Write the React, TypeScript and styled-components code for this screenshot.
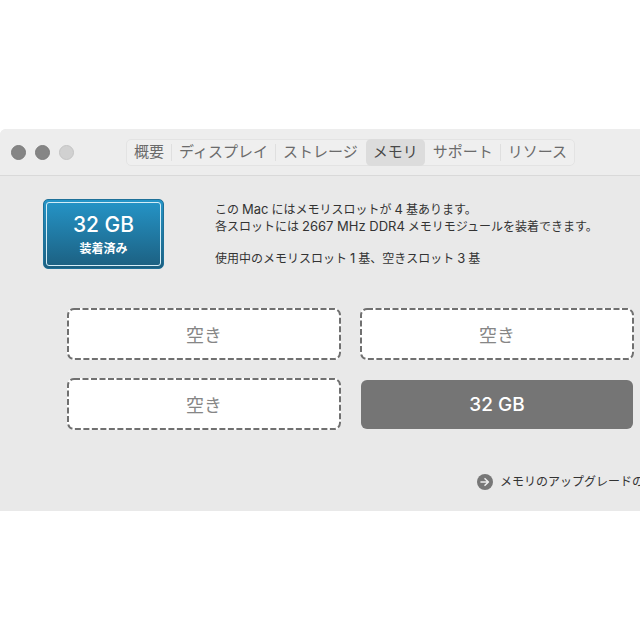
import React from "react";
import styled, { createGlobalStyle, css } from "styled-components";

const GlobalStyle = createGlobalStyle`
  * { box-sizing: border-box; }
  body {
    margin: 0;
    background: #fff;
    color: #333;
    font-family: Inter, "Noto Sans CJK JP", sans-serif;
    overflow-x: hidden;
  }
`;

const Page = styled.main`
  padding: 129px 0;
`;

const Window = styled.section`
  background: #e9e9e9;
  border-top-left-radius: 6px;
  overflow: hidden;
`;

const TitleBar = styled.header`
  display: flex;
  align-items: center;
  height: 47px;
  padding-left: 11px;
  background: #ededed;
  border-bottom: 1px solid #d9d9d9;
`;

const Lights = styled.div`
  display: flex;
  flex: none;
  gap: 9px;
  width: 115px;
`;

const Light = styled.button<{ $dim?: boolean }>`
  width: 15px;
  height: 15px;
  padding: 0;
  border: 1px solid ${(p) => (p.$dim ? "#c4c4c4" : "#7d7d7d")};
  border-radius: 50%;
  background: ${(p) => (p.$dim ? "#d1d1d1" : "#858585")};
`;

const Tabs = styled.nav`
  display: flex;
  flex: none;
  height: 27px;
  border: 1px solid #e3e3e3;
  border-radius: 5px;
  background: #efefef;
`;

const Tab = styled.button<{ $active?: boolean; $divided?: boolean }>`
  display: flex;
  align-items: center;
  padding: 0 7px;
  border: 0;
  background: none;
  color: #6b6b6b;
  font: 400 15px/20px Inter, "Noto Sans CJK JP", sans-serif;
  white-space: nowrap;

  &::after {
    content: "";
    width: 1px;
    height: 17px;
    margin-right: -8px;
    margin-left: 7px;
    background: ${(p) => (p.$divided ? "#dfdfdf" : "transparent")};
  }

  & + & {
    margin-left: 1px;
  }

  ${(p) =>
    p.$active &&
    css`
      margin-top: -1px;
      margin-bottom: -1px;
      border-radius: 5px;
      background: #dcdcdc;
      color: #484848;
    `}
`;

const Summary = styled.div`
  display: flex;
  align-items: flex-start;
  gap: 51px;
  padding: 23px 0 0 43px;
`;

const Badge = styled.div`
  flex: none;
  width: 121px;
  padding: 2px;
  border: 1px solid #1e7098;
  border-radius: 5px;
  background: linear-gradient(#2595c8, #1c5f80);
`;

const BadgeFace = styled.div`
  display: flex;
  flex-direction: column;
  align-items: center;
  height: 64px;
  padding-top: 7px;
  border: 1px solid #d4edf7;
  border-radius: 3px;
  color: #fff;
`;

const BadgeSize = styled.strong`
  font-size: 21px;
  font-weight: 500;
  line-height: 30px;
`;

const BadgeState = styled.span`
  font-size: 12px;
  font-weight: 700;
  line-height: 18px;
`;

const Description = styled.div`
  padding-top: 2px;
  font-size: 12px;
  line-height: 16px;
  white-space: nowrap;
`;

const Line = styled.p<{ $spaced?: boolean }>`
  margin: ${(p) => (p.$spaced ? "15px" : 0)} 0 0;
`;

const Latin = styled.span`
  margin: 0 3px;
  font-size: 13px;
`;

const Slots = styled.div`
  display: grid;
  grid-template-columns: 1fr 1fr;
  gap: 18px 19px;
  padding: 39px 6px 0 67px;
`;

const EmptySlot = styled.div`
  position: relative;
  display: flex;
  align-items: center;
  justify-content: center;
  height: 52px;
  border-radius: 7px;
  background: #fff;
  color: #868686;
  font-size: 18px;
`;

const Dashes = styled.svg`
  position: absolute;
  inset: 0;
  width: 100%;
  height: 100%;

  rect {
    width: calc(100% - 2px);
    height: calc(100% - 2px);
    fill: none;
    stroke: #707070;
    stroke-width: 2px;
    stroke-dasharray: 6 2.5;
  }
`;

const FilledSlot = styled.div`
  display: flex;
  align-items: center;
  justify-content: center;
  margin: 2px 1px 1px;
  height: 49px;
  border-radius: 6px;
  background: #757575;
  color: #fff;
  font-size: 19px;
  font-weight: 500;
`;

const Footer = styled.footer`
  display: flex;
  padding: 42px 0 19px 477px;
`;

const UpgradeLink = styled.a`
  display: flex;
  align-items: center;
  gap: 7px;
  color: #333;
  font-size: 12px;
  line-height: 20px;
  text-decoration: none;
  white-space: nowrap;
`;

const ArrowIcon = styled.svg`
  flex: none;
  width: 16px;
  height: 16px;
`;

const tabs = [
  { label: "概要", divided: true },
  { label: "ディスプレイ", divided: true },
  { label: "ストレージ" },
  { label: "メモリ", active: true },
  { label: "サポート", divided: true },
  { label: "リソース" },
];

function Empty() {
  return (
    <EmptySlot>
      <Dashes aria-hidden="true">
        <rect x="1" y="1" rx="6" />
      </Dashes>
      空き
    </EmptySlot>
  );
}

export default function App() {
  return (
    <Page>
      <GlobalStyle />
      <Window>
        <TitleBar>
          <Lights>
            <Light aria-label="閉じる" />
            <Light aria-label="しまう" />
            <Light aria-label="拡大" $dim disabled />
          </Lights>
          <Tabs>
            {tabs.map((t) => (
              <Tab
                key={t.label}
                $active={t.active}
                $divided={t.divided}
                aria-current={t.active ? "page" : undefined}
              >
                {t.label}
              </Tab>
            ))}
          </Tabs>
        </TitleBar>
        <Summary>
          <Badge>
            <BadgeFace>
              <BadgeSize>32 GB</BadgeSize>
              <BadgeState>装着済み</BadgeState>
            </BadgeFace>
          </Badge>
          <Description>
            <Line>
              この<Latin>Mac</Latin>にはメモリスロットが<Latin>4</Latin>基あります。
            </Line>
            <Line>
              各スロットには<Latin>2667 MHz DDR4</Latin>メモリモジュールを装着できます。
            </Line>
            <Line $spaced>
              使用中のメモリスロット<Latin>1</Latin>基、空きスロット<Latin>3</Latin>基
            </Line>
          </Description>
        </Summary>
        <Slots>
          <Empty />
          <Empty />
          <Empty />
          <FilledSlot>32 GB</FilledSlot>
        </Slots>
        <Footer>
          <UpgradeLink href="#upgrade">
            <ArrowIcon viewBox="0 0 16 16" aria-hidden="true">
              <circle cx="8" cy="8" r="8" fill="#777" />
              <path
                d="M4 8h7.2M8 4.7 11.4 8 8 11.3"
                fill="none"
                stroke="#ededed"
                strokeWidth="1.6"
                strokeLinecap="round"
                strokeLinejoin="round"
              />
            </ArrowIcon>
            メモリのアップグレードの
          </UpgradeLink>
        </Footer>
      </Window>
    </Page>
  );
}
